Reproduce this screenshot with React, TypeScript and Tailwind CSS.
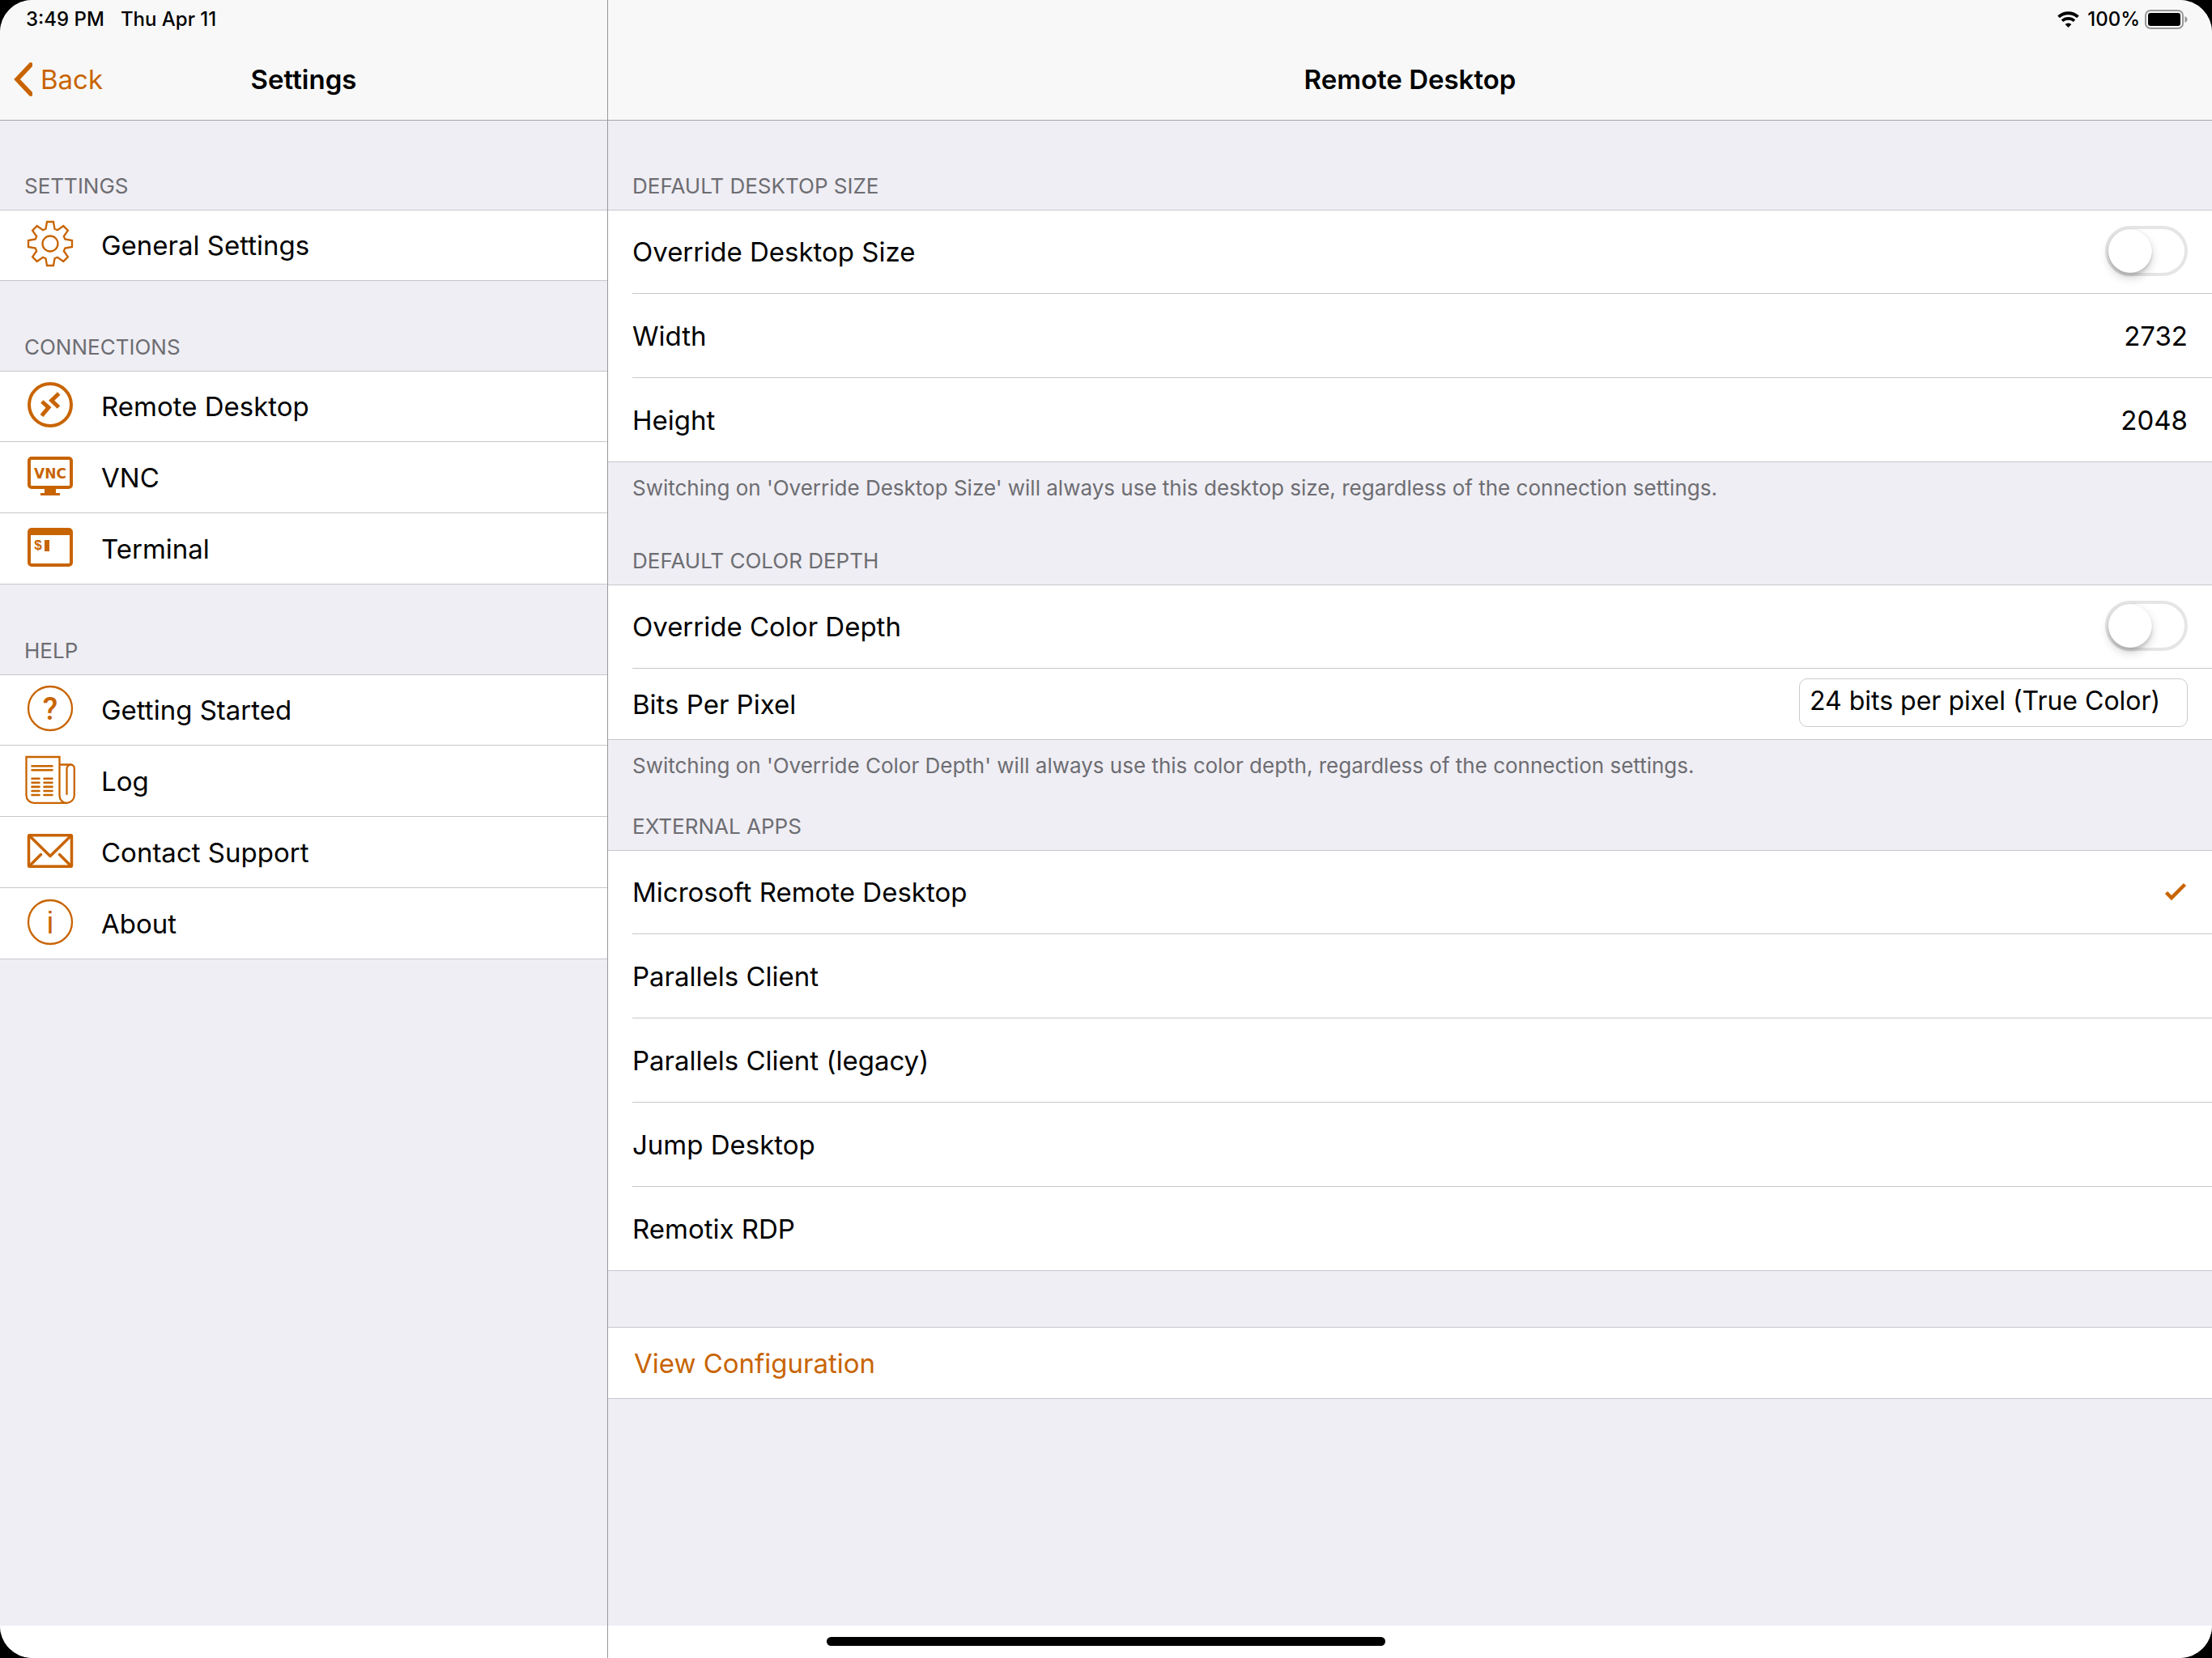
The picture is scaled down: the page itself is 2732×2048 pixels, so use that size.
import { useState, type ReactNode } from "react";

function GearIcon() {
  return (
    <g fill="none" stroke="currentColor" strokeWidth="2.3">
      <path d="M25.5 11.7 27 3H35L36.5 11.7 40 13.2 47.3 8.1 52.9 13.7 47.8 21 49.3 24.5 58 26V34L49.3 35.5 47.8 39 52.9 46.3 47.3 51.9 40 46.8 36.5 48.3 35 57H27L25.5 48.3 22 46.8 14.7 51.9 9.1 46.3 14.2 39 12.7 35.5 4 34V26L12.7 24.5 14.2 21 9.1 13.7 14.7 8.1 22 13.2Z" />
      <circle cx="31" cy="30" r="9.5" />
    </g>
  );
}

function RemoteDesktopIcon() {
  return (
    <g fill="none" stroke="currentColor">
      <circle cx="31" cy="30" r="26" strokeWidth="4" />
      <path strokeWidth="5" d="M20.8 26 29 33.3 20.5 43.5M41.7 16 32.7 24.7 41.5 33" />
    </g>
  );
}

function VncIcon() {
  return (
    <g fill="currentColor">
      <rect x="5" y="8" width="52" height="36" rx="3" fill="none" stroke="currentColor" strokeWidth="4" />
      <path d="M24 45H38V51H43V54H19V51H24Z" />
      <text x="31" y="33" textAnchor="middle" className="font-['DejaVu_Sans',sans-serif] text-[17px] font-bold">
        VNC
      </text>
    </g>
  );
}

function TerminalIcon() {
  return (
    <g fill="currentColor">
      <rect x="5" y="8" width="52" height="44" rx="3" fill="none" stroke="currentColor" strokeWidth="4" />
      <path d="M5 7H57V15H5Z" />
      <text x="16" y="33" textAnchor="middle" className="font-['Liberation_Sans',sans-serif] text-[17px] font-bold">
        $
      </text>
      <path d="M24 21H30V35H24Z" />
    </g>
  );
}

function Ring() {
  return <circle cx="31" cy="30" r="27" fill="none" stroke="currentColor" strokeWidth="2.3" />;
}

function QuestionIcon() {
  return (
    <g>
      <Ring />
      <text
        x="31"
        y="44"
        textAnchor="middle"
        fill="currentColor"
        className="font-[Roboto,sans-serif] text-[38px] font-medium"
      >
        ?
      </text>
    </g>
  );
}

function InfoIcon() {
  return (
    <g>
      <Ring />
      <text
        x="31"
        y="44"
        textAnchor="middle"
        fill="currentColor"
        className="font-['Liberation_Sans',sans-serif] text-[38px]"
      >
        i
      </text>
    </g>
  );
}

function LogIcon() {
  return (
    <g fill="none" stroke="currentColor" strokeWidth="2.3" strokeLinecap="round">
      <path d="M42.5 11.5V2H1.5V49.5A9.5 9.5 0 0 0 11 58.800H51.5A9.5 9.5 0 0 0 60.800 49.5V16A4.5 4.5 0 0 0 56.5 11.5H42.5V49.5C42.5 55 46.5 58.800 51.5 58.800" />
      <path d="M56.5 11.5A5 5 0 0 0 51.5 16.5V48" />
      <path strokeWidth="2.6" d="M8.5 13.3H33.5M8.5 18.3H33.5" />
      <path
        strokeWidth="2.6"
        d="M8.5 28.7H17.5M8.5 33.8H17.5M8.5 38.9H17.5M8.5 44H17.5M8.5 49H17.5M23.5 28.7H33.5M23.5 33.8H33.5M23.5 38.9H33.5M23.5 44H33.5M23.5 49H33.5"
      />
    </g>
  );
}

function MailIcon() {
  return (
    <g fill="none" stroke="currentColor" strokeWidth="3.5" strokeLinecap="round" strokeLinejoin="round">
      <rect x="4.5" y="10.7" width="53" height="38.6" rx="1.5" />
      <path d="M5 11 31 36.5 57 11M5 49 19.5 34.5M57 49 42.5 34.5" />
    </g>
  );
}

type NavItem = { label: string; icon: ReactNode };

const connections: NavItem[] = [
  { label: "Remote Desktop", icon: <RemoteDesktopIcon /> },
  { label: "VNC", icon: <VncIcon /> },
  { label: "Terminal", icon: <TerminalIcon /> },
];

const help: NavItem[] = [
  { label: "Getting Started", icon: <QuestionIcon /> },
  { label: "Log", icon: <LogIcon /> },
  { label: "Contact Support", icon: <MailIcon /> },
  { label: "About", icon: <InfoIcon /> },
];

const externalApps = [
  "Microsoft Remote Desktop",
  "Parallels Client",
  "Parallels Client (legacy)",
  "Jump Desktop",
  "Remotix RDP",
];

function SectionTitle({ children, className }: { children: ReactNode; className: string }) {
  return (
    <h2 className={`px-[30px] pb-[13px] text-[26px] leading-8 text-[#6d6d72] uppercase ${className}`}>{children}</h2>
  );
}

function NavList({ items }: { items: NavItem[] }) {
  return (
    <ul className="border-t border-[#c8c7cc] bg-white">
      {items.map((item) => (
        <li key={item.label} className="h-[88px] border-b border-[#c8c7cc] first:h-[87px]">
          <a href="#" className="flex h-full items-center gap-8 pl-[31px]">
            <svg viewBox="0 0 62 60" aria-hidden="true" className="mb-1 h-[60px] w-[62px] shrink-0 text-[#c86400]">
              {item.icon}
            </svg>
            <span>{item.label}</span>
          </a>
        </li>
      ))}
    </ul>
  );
}

function Group({ children }: { children: ReactNode }) {
  return <div className="divide-y divide-[#c8c7cc] border-y border-[#c8c7cc] bg-white pl-[30px]">{children}</div>;
}

const tallRow = "flex h-[104px] items-center justify-between pr-[30px] first:h-[103px] last:h-[103px]";

function SwitchRow({ id, label }: { id: string; label: string }) {
  return (
    <div className={tallRow}>
      <label htmlFor={id}>{label}</label>
      <input
        id={id}
        type="checkbox"
        role="switch"
        className="mb-0.5 flex h-[62px] w-[102px] appearance-none rounded-full border-4 border-[#e5e5e5] bg-white before:size-[54px] before:rounded-full before:bg-white before:shadow-[0_6px_12px_rgba(0,0,0,0.18),0_4px_3px_rgba(0,0,0,0.1),0_0_1px_rgba(0,0,0,0.2)] checked:justify-end checked:border-[#c86400] checked:bg-[#c86400]"
      />
    </div>
  );
}

function NumberRow({ id, label, value }: { id: string; label: string; value: string }) {
  return (
    <div className={tallRow}>
      <label htmlFor={id}>{label}</label>
      <input id={id} inputMode="numeric" defaultValue={value} className="w-60 bg-transparent text-right" />
    </div>
  );
}

function FootNote({ children }: { children: ReactNode }) {
  return <p className="px-[30px] pt-4 text-[26px] leading-8 text-[#6d6d72]">{children}</p>;
}

function Sidebar() {
  return (
    <aside className="flex w-[751px] shrink-0 flex-col border-r border-[#98989c]">
      <header className="border-b border-[#a7a7aa] bg-[#f8f8f8]">
        <div className="flex h-12 items-center gap-5 pl-8 text-2xl font-medium">
          <span>3:49 PM</span>
          <span>Thu Apr 11</span>
        </div>
        <div className="grid h-[100px] grid-cols-[1fr_auto_1fr] items-center">
          <button type="button" className="ml-4 flex items-center gap-2.5 text-[#c86400]">
            <svg viewBox="0 0 24 42" aria-hidden="true" className="h-[42px] w-6">
              <path
                d="M22 3 5 21 22 39"
                fill="none"
                stroke="currentColor"
                strokeWidth="5.5"
                strokeLinecap="round"
              />
            </svg>
            Back
          </button>
          <h1 className="font-semibold">Settings</h1>
        </div>
      </header>
      <nav className="flex-1 bg-[#efeef4]">
        <SectionTitle className="pt-[65px]">Settings</SectionTitle>
        <NavList items={[{ label: "General Settings", icon: <GearIcon /> }]} />
        <SectionTitle className="pt-[66px]">Connections</SectionTitle>
        <NavList items={connections} />
        <SectionTitle className="pt-[66px]">Help</SectionTitle>
        <NavList items={help} />
      </nav>
      <div className="h-10 bg-white" />
    </aside>
  );
}

function StatusIcons() {
  return (
    <div className="flex h-12 items-center justify-end pr-[30px] text-2xl font-medium">
      <svg viewBox="0 0 27 20" aria-hidden="true" className="mr-2.5 h-5 w-[27px]">
        <g fill="none" stroke="black">
          <path strokeWidth="4" d="M1.6 6.9A17.4 17.4 0 0 1 25.4 6.9" />
          <path strokeWidth="3.6" d="M6 11.8A11 11 0 0 1 21 11.8" />
        </g>
        <path d="M13.5 20 9.6 16.1A5.6 5.6 0 0 1 17.4 16.1Z" />
      </svg>
      <span>100%</span>
      <svg viewBox="0 0 53 24" aria-hidden="true" className="ml-1.5 h-6 w-[53px]">
        <rect x="1" y="1" width="46" height="22" rx="6" fill="none" stroke="#979797" strokeWidth="2" />
        <rect x="4" y="4" width="40" height="16" rx="3" />
        <path d="M49.5 8C53.5 9.5 53.5 14.5 49.5 16Z" fill="#979797" />
      </svg>
    </div>
  );
}

function Detail() {
  const [app, setApp] = useState(externalApps[0]);
  return (
    <main className="flex min-w-0 flex-1 flex-col">
      <header className="border-b border-[#a7a7aa] bg-[#f8f8f8]">
        <StatusIcons />
        <div className="flex h-[100px] items-center justify-center">
          <h1 className="font-semibold">Remote Desktop</h1>
        </div>
      </header>
      <div className="flex-1 bg-[#efeef4]">
        <SectionTitle className="pt-[65px]">Default Desktop Size</SectionTitle>
        <Group>
          <SwitchRow id="override-size" label="Override Desktop Size" />
          <NumberRow id="width" label="Width" value="2732" />
          <NumberRow id="height" label="Height" value="2048" />
        </Group>
        <FootNote>
          Switching on 'Override Desktop Size' will always use this desktop size, regardless of the connection
          settings.
        </FootNote>

        <SectionTitle className="pt-[58px]">Default Color Depth</SectionTitle>
        <Group>
          <SwitchRow id="override-depth" label="Override Color Depth" />
          <div className="flex h-[87px] items-center justify-between pr-[30px]">
            <label htmlFor="depth">Bits Per Pixel</label>
            <select
              id="depth"
              className="mb-1 h-[60px] w-[480px] appearance-none rounded-[10px] border border-[#cccccc] bg-white pb-1 pl-3 text-[32px]"
            >
              <option>24 bits per pixel (True Color)</option>
            </select>
          </div>
        </Group>
        <FootNote>
          Switching on 'Override Color Depth' will always use this color depth, regardless of the connection settings.
        </FootNote>

        <SectionTitle className="pt-[43px]">External Apps</SectionTitle>
        <Group>
          {externalApps.map((name) => (
            <label key={name} className={`relative ${tallRow}`}>
              {name}
              <input
                type="radio"
                name="external-app"
                checked={app === name}
                onChange={() => setApp(name)}
                className="sr-only"
              />
              {app === name && (
                <svg viewBox="0 0 30 24" aria-hidden="true" className="h-6 w-[30px] text-[#c86400]">
                  <path d="M3.5 12.5 10 19 26.5 2.5" fill="none" stroke="currentColor" strokeWidth="4.5" />
                </svg>
              )}
            </label>
          ))}
        </Group>

        <div className="mt-[69px] border-y border-[#c8c7cc] bg-white">
          <button type="button" className="flex h-[87px] w-full items-center pl-8 text-[#c86400]">
            View Configuration
          </button>
        </div>
      </div>
      <div className="h-10 bg-white" />
    </main>
  );
}

export default function App() {
  return (
    <div className="bg-black">
      <div className="relative flex min-h-screen overflow-hidden rounded-[40px] bg-white font-[Inter,sans-serif] text-[33px] leading-10 text-black">
        <Sidebar />
        <Detail />
        <div className="absolute bottom-[15px] left-1/2 h-[11px] w-[690px] -translate-x-1/2 rounded-full bg-black" />
      </div>
    </div>
  );
}
